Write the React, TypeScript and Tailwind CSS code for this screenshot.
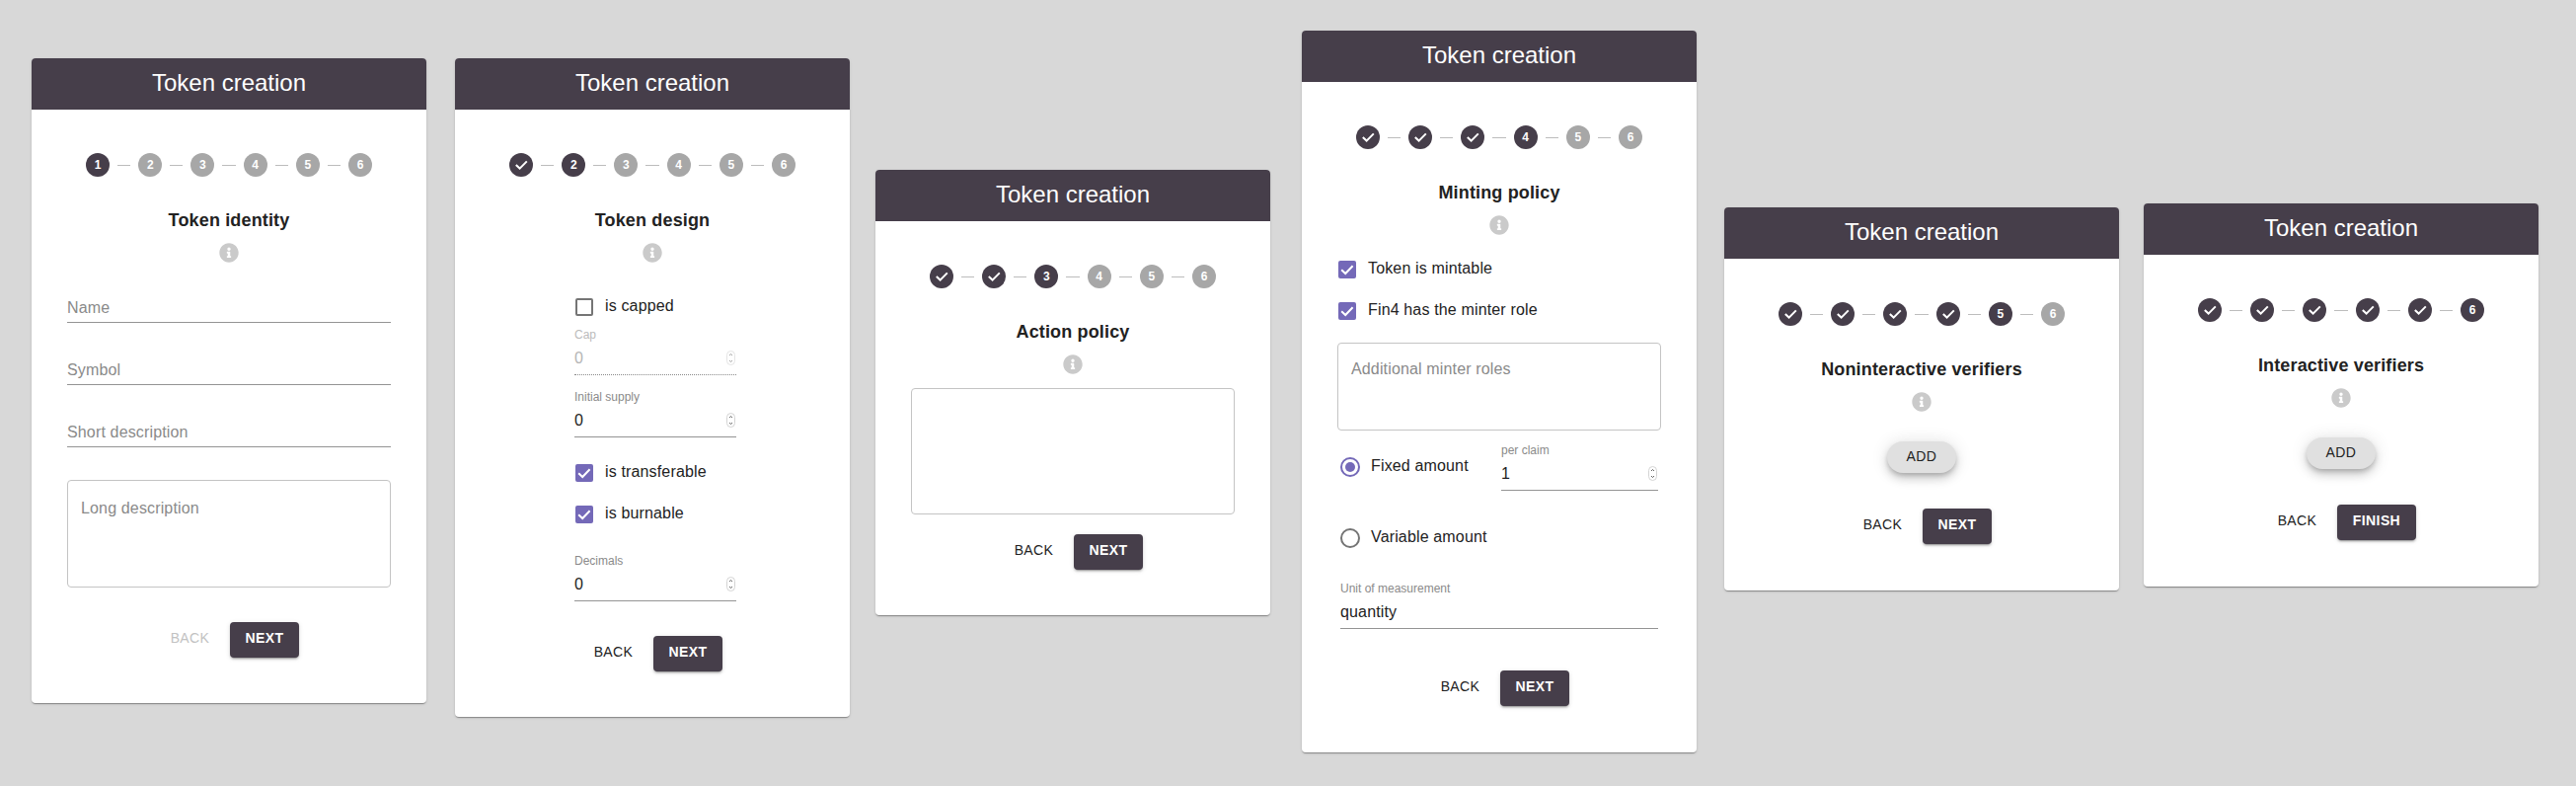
import type { ReactNode } from "react";
import { FaInfoCircle } from "react-icons/fa";

function Stepper({ active }: { active: number }) {
  const steps = [1, 2, 3, 4, 5, 6];
  return (
    <div className="mt-[44px] flex items-center justify-center">
      {steps.map((n) => (
        <div key={n} className="flex items-center">
          {n > 1 && <span className="mx-[8px] h-px w-[13.2px] bg-[#bdbdbd]" />}
          <span
            className={
              n <= active
                ? "flex h-[24px] w-[24px] items-center justify-center rounded-full bg-[#463e4a] text-[12px] leading-none font-bold text-white"
                : "flex h-[24px] w-[24px] items-center justify-center rounded-full bg-[#a7a7a7] text-[12px] leading-none font-bold text-white"
            }
          >
            {n < active ? (
              <svg viewBox="0 0 24 24" className="h-[24px] w-[24px]">
                <path d="M6.8 12 L10.6 15.6 L17.8 8.4" fill="none" stroke="#fff" strokeWidth="2" />
              </svg>
            ) : (
              n
            )}
          </span>
        </div>
      ))}
    </div>
  );
}

function Checkbox({ label, checked }: { label: string; checked?: boolean }) {
  return (
    <div className="flex h-[18px] items-start">
      {checked ? (
        <span className="h-[18px] w-[18px] rounded-[2px] bg-[#7469b8]">
          <svg viewBox="0 0 18 18" className="h-[18px] w-[18px]">
            <path d="M3.2 9.3 L7.2 13 L14.6 5.2" fill="none" stroke="#fff" strokeWidth="2" />
          </svg>
        </span>
      ) : (
        <span className="h-[18px] w-[18px] rounded-[2px] border-2 border-[#757575]" />
      )}
      <span className="ml-[12px] text-[16px] leading-[16px] tracking-[0.15px] whitespace-nowrap text-[#222]">{label}</span>
    </div>
  );
}

function Radio({ checked }: { checked?: boolean }) {
  return checked ? (
    <span className="flex h-[20px] w-[20px] shrink-0 items-center justify-center rounded-full border-2 border-[#7469b8]">
      <span className="h-[10px] w-[10px] rounded-full bg-[#7469b8]" />
    </span>
  ) : (
    <span className="h-[20px] w-[20px] shrink-0 rounded-full border-2 border-[#757575]" />
  );
}

function Spinner({ dim }: { dim?: boolean }) {
  return (
    <svg viewBox="0 0 9 15" className={dim ? "mr-[1px] h-[15px] w-[9px] opacity-60" : "mr-[1px] h-[15px] w-[9px]"}>
      <rect x="0.5" y="0.5" width="8" height="14" rx="4" fill="#fff" stroke="#d4d4d4" />
      <path d="M3 5 L4.5 3.5 L6 5 M3 10 L4.5 11.5 L6 10" fill="none" stroke="#555" strokeWidth="0.9" />
    </svg>
  );
}

function NumberField({
  label,
  value,
  disabled,
  spinner = true,
}: {
  label: string;
  value: string;
  disabled?: boolean;
  spinner?: boolean;
}) {
  return (
    <div className="flex flex-col">
      <span
        className={
          disabled
            ? "h-[14px] text-[12px] leading-[14px] text-[#bbbbbb]"
            : "h-[14px] text-[12px] leading-[14px] text-[#8a8a8a]"
        }
      >
        {label}
      </span>
      <div
        className={
          disabled
            ? "mt-[4px] flex h-[30px] items-start border-b border-dotted border-[#8a8a8a] pb-[5px]"
            : "mt-[4px] flex h-[30px] items-start border-b border-[#949494] pb-[5px]"
        }
      >
        <input
          readOnly
          value={value}
          className={
            disabled
              ? "h-[24px] w-0 min-w-0 flex-1 pt-[2px] text-[16px] tracking-[0.15px] text-[#b5b5b5] outline-none"
              : "h-[24px] w-0 min-w-0 flex-1 pt-[2px] text-[16px] tracking-[0.15px] text-[#222] outline-none"
          }
        />
        {spinner && (
          <span className="flex h-[24px] items-center">
            <Spinner dim={disabled} />
          </span>
        )}
      </div>
    </div>
  );
}

function TextField({ placeholder, className }: { placeholder: string; className: string }) {
  return (
    <div className={className}>
      <input
        placeholder={placeholder}
        className="h-[31px] w-full border-b border-[#949494] pt-[1px] text-[16px] tracking-[0.15px] outline-none placeholder:text-[#8a8a8a]"
      />
    </div>
  );
}

function Area({ placeholder, className }: { placeholder?: string; className: string }) {
  return (
    <textarea
      placeholder={placeholder}
      className={
        "block resize-none rounded-[4px] border border-[#c4c4c4] px-[13px] pb-[14px] text-[16px] leading-[19px] tracking-[0.15px] outline-none placeholder:text-[#8a8a8a] " +
        className
      }
    />
  );
}

function Actions({ next = "NEXT", backDisabled, className }: { next?: string; backDisabled?: boolean; className: string }) {
  return (
    <div className={"flex justify-center pr-[4px] " + className}>
      <button
        className={
          backDisabled
            ? "mr-[5px] flex h-[36px] w-[71px] justify-center pt-[7px] text-[14px] leading-[18px] tracking-[0.4px] text-[#c2c2c2]"
            : "mr-[5px] flex h-[36px] w-[71px] justify-center pt-[7px] text-[14px] leading-[18px] tracking-[0.4px] text-[#222]"
        }
      >
        BACK
      </button>
      <button
        className={
          next === "FINISH"
            ? "flex h-[36px] w-[80px] justify-center rounded-[4px] bg-[#463e4a] pt-[7px] text-[14px] leading-[18px] font-bold tracking-[0.4px] text-white shadow-[0_3px_1px_-2px_rgba(0,0,0,0.2),0_2px_2px_0_rgba(0,0,0,0.14),0_1px_5px_0_rgba(0,0,0,0.12)]"
            : "flex h-[36px] w-[70px] justify-center rounded-[4px] bg-[#463e4a] pt-[7px] text-[14px] leading-[18px] font-bold tracking-[0.4px] text-white shadow-[0_3px_1px_-2px_rgba(0,0,0,0.2),0_2px_2px_0_rgba(0,0,0,0.14),0_1px_5px_0_rgba(0,0,0,0.12)]"
        }
      >
        {next}
      </button>
    </div>
  );
}

function AddButton() {
  return (
    <div className="mt-[30px] flex justify-center">
      <button className="h-[32px] w-[70px] rounded-[16px] bg-[#e0e0e0] pb-[2px] text-[14px] leading-[18px] tracking-[0.4px] text-[#222] shadow-[0_3px_5px_-1px_rgba(0,0,0,0.2),0_6px_10px_0_rgba(0,0,0,0.14),0_1px_18px_0_rgba(0,0,0,0.12)]">
        ADD
      </button>
    </div>
  );
}

function Card({
  className,
  active,
  title,
  children,
}: {
  className: string;
  active: number;
  title: string;
  children: ReactNode;
}) {
  return (
    <section
      className={
        "w-[400px] shrink-0 overflow-hidden rounded-[4px] bg-white shadow-[0_2px_1px_-1px_rgba(0,0,0,0.2),0_1px_1px_0_rgba(0,0,0,0.14),0_1px_3px_0_rgba(0,0,0,0.12)] " +
        className
      }
    >
      <header className="flex h-[52px] items-center justify-center bg-[#463e4a] pb-[3px] text-[24px] text-white">
        Token creation
      </header>
      <Stepper active={active} />
      <h2 className="mt-[32px] text-center text-[18px] leading-[24px] font-bold tracking-[0.15px] text-[#222]">{title}</h2>
      <div className="mt-[11px] flex justify-center text-[20px] text-[#cacaca]">
        <FaInfoCircle />
      </div>
      {children}
    </section>
  );
}

export default function App() {
  return (
    <div className="flex min-h-screen w-[2610px] items-start bg-[#d8d8d8] font-['Liberation_Sans',Arial,sans-serif]">
      <Card className="mt-[59px] ml-[32px] pb-[46px]" active={1} title="Token identity">
        <TextField placeholder="Name" className="mx-[36px] mt-[30px]" />
        <TextField placeholder="Symbol" className="mx-[36px] mt-[32px]" />
        <TextField placeholder="Short description" className="mx-[36px] mt-[32px]" />
        <Area placeholder="Long description" className="mx-[36px] mt-[33px] h-[109px] w-[328px] pt-[18px]" />
        <Actions backDisabled className="mt-[35px]" />
      </Card>

      <Card className="mt-[59px] ml-[29px] pb-[46px]" active={2} title="Token design">
        <div className="mt-[36px] ml-[121px] w-[164px]">
          <div className="ml-[1px]">
            <Checkbox label="is capped" />
          </div>
          <div className="mt-[12px]">
            <NumberField label="Cap" value="0" disabled />
          </div>
          <div className="mt-[15px]">
            <NumberField label="Initial supply" value="0" />
          </div>
          <div className="mt-[27px] ml-[1px]">
            <Checkbox label="is transferable" checked />
          </div>
          <div className="mt-[24px] ml-[1px]">
            <Checkbox label="is burnable" checked />
          </div>
          <div className="mt-[31px]">
            <NumberField label="Decimals" value="0" />
          </div>
        </div>
        <Actions className="mt-[35px]" />
      </Card>

      <Card className="mt-[172px] ml-[26px] pb-[46px]" active={3} title="Action policy">
        <Area className="mx-[36px] mt-[14px] h-[128px] w-[328px] pt-[18px]" />
        <Actions className="mt-[20px]" />
      </Card>

      <Card className="mt-[31px] ml-[32px] pb-[47px]" active={4} title="Minting policy">
        <div className="mt-[26px] ml-[37px]">
          <Checkbox label="Token is mintable" checked />
        </div>
        <div className="mt-[24px] ml-[37px]">
          <Checkbox label="Fin4 has the minter role" checked />
        </div>
        <Area placeholder="Additional minter roles" className="mx-[36px] mt-[23px] h-[89px] w-[328px] pt-[16px]" />
        <div className="mt-[13px] ml-[39px] flex w-[322px]">
          <div className="mt-[14px] flex w-[163px] shrink-0 items-start">
            <Radio checked />
            <span className="ml-[11px] text-[16px] leading-[18px] tracking-[0.15px] whitespace-nowrap text-[#222]">Fixed amount</span>
          </div>
          <div className="w-[159px]">
            <NumberField label="per claim" value="1" />
          </div>
        </div>
        <div className="mt-[38px] ml-[39px] flex items-start">
          <Radio />
          <span className="ml-[11px] text-[16px] leading-[18px] tracking-[0.15px] whitespace-nowrap text-[#222]">Variable amount</span>
        </div>
        <div className="mt-[34px] ml-[39px] w-[322px]">
          <NumberField label="Unit of measurement" value="quantity" spinner={false} />
        </div>
        <Actions className="mt-[42px]" />
      </Card>

      <Card className="mt-[210px] ml-[28px] pb-[47px]" active={5} title="Noninteractive verifiers">
        <AddButton />
        <Actions className="mt-[36px]" />
      </Card>

      <Card className="mt-[206px] ml-[25px] pb-[47px]" active={6} title="Interactive verifiers">
        <AddButton />
        <Actions next="FINISH" className="mt-[36px]" />
      </Card>
    </div>
  );
}
